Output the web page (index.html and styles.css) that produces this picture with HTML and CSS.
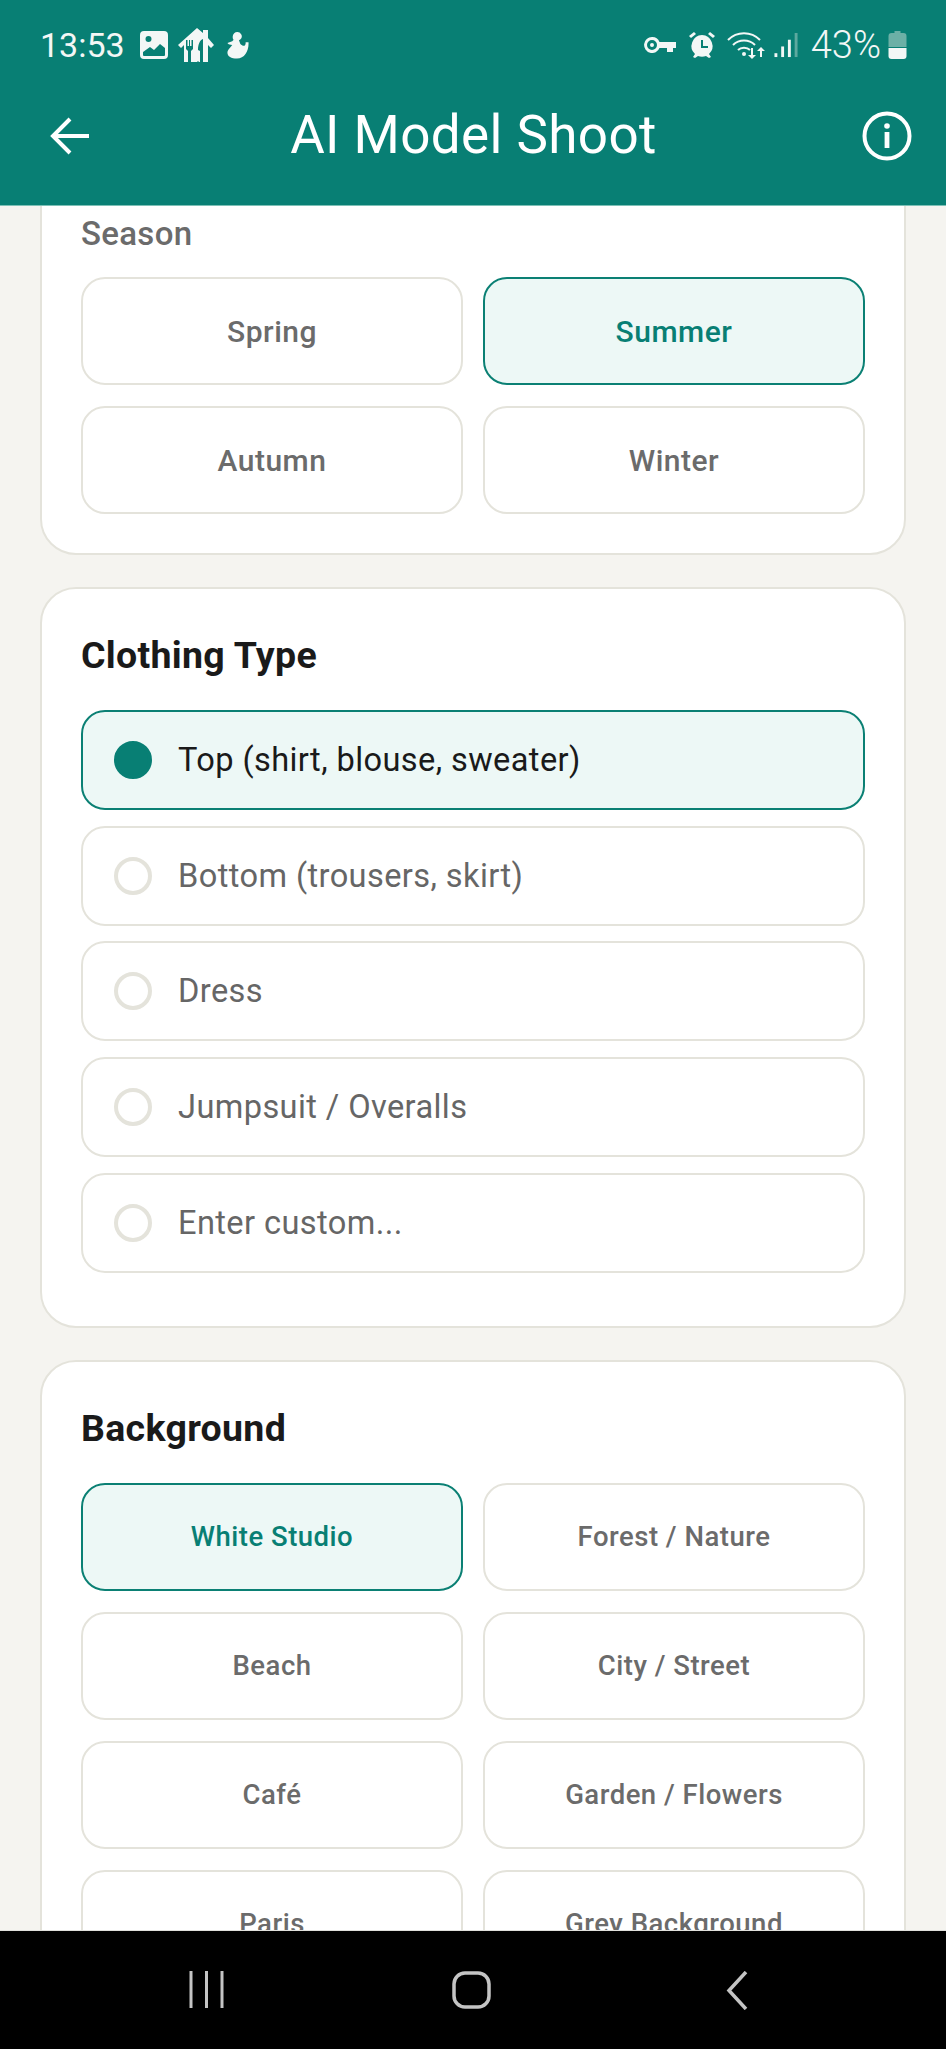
FILE: index.html
```html
<!DOCTYPE html>
<html lang="en">
<head>
<meta charset="utf-8">
<title>AI Model Shoot</title>
<link rel="stylesheet" href="styles.css">
</head>
<body>
<div class="screen">
  <header class="appbar">
    <div class="status">
      <div class="status-side">
        <span class="clock">13:53</span>
        <svg class="ic-photo" viewBox="0 0 28 28"><path fill-rule="evenodd" d="M4 0h20a4 4 0 0 1 4 4v20a4 4 0 0 1-4 4H4a4 4 0 0 1-4-4V4a4 4 0 0 1 4-4zM3 21v3a1 1 0 0 0 1 1h20a1 1 0 0 0 1-1v-7l-5-4-6 6-4-3z M8.500 5a3 3 0 1 0 0 6 3 3 0 0 0 0-6z"/></svg>
        <svg class="ic-food" viewBox="0 0 36 34"><path fill-rule="evenodd" d="M19 0l6 5V2h5v8l6 7-3 3-3-3v17h-9l-1-1-1 1H6V17l-3 3-3-3zM8 12v9l2 2v11h3V23l2-2v-9h-1.500v6H12v-6h-1v6H9.500v-6zM25 11c-3 1-5 5-5 11l2 1v11h3z"/></svg>
        <svg class="ic-duck" viewBox="0 0 24 28"><path d="M12 0a4.500 4.500 0 0 1 4 6.500c-.7 1-1.500 1.500-2.500 2l1.500 4c2 2 4 2.500 5 1 .5-1 .5-2 .5-3h3c.5 9-4 17-12 17-6 0-10-2-10-6 0-3 3-5 5-8-2 0-4-.5-5-2l5-2 1.500-1.500C7 7 7 6 7 4.500A4.700 4.700 0 0 1 12 0z"/></svg>
      </div>
      <div class="status-side">
        <svg class="ic-key" viewBox="0 0 32 16"><path fill-rule="evenodd" d="M8 0a8 8 0 0 1 7.500 5H32v6h-3v4h-6v-4h-7.500A8 8 0 1 1 8 0zm0 3a5 5 0 1 0 0 10 5 5 0 0 0 0-10zm0 3a2 2 0 1 1 0 4 2 2 0 0 1 0-4z"/></svg>
        <svg class="ic-alarm" viewBox="0 0 26 26"><path d="M5 0l2 2-5 4-2-2zM21 0l5 4-2 2-5-4zM13 3a11 11 0 0 1 7 19l2 3-2 1-3-2a11 11 0 0 1-8 0l-3 2-2-1 2-3A11 11 0 0 1 13 3z"/><path class="alarm-hand" d="M12 8h2v6h5v2h-7z"/></svg>
        <svg class="ic-wifi" viewBox="0 0 40 28"><g fill="none" stroke="#f3f7f6" stroke-width="2"><path d="M1 9c9-9 23-9 32 0"/><path d="M6 14c6-6 16-6 22 0"/><path d="M11 19c3-3 9-3 12 0"/></g><circle cx="17" cy="23" r="2" fill="#f3f7f6"/><path fill="#f3f7f6" d="M24 17h2v7h3l-4 4-4-4h3zM34 16l4 4h-3v6h-2v-6h-3z"/></svg>
        <svg class="ic-signal" viewBox="0 0 24 26"><rect x="0" y="21" width="3" height="4" fill="#f3f7f6"/><rect x="7" y="14" width="3" height="11" fill="#f3f7f6"/><rect x="14" y="7" width="3" height="18" fill="#f3f7f6"/><rect x="21" y="0" width="3" height="25" fill="#5da99f"/></svg>
        <span class="clock pct">43%</span>
        <svg class="ic-batt" viewBox="0 0 18 28"><path fill="#6cb0a6" d="M6 0h6v2h3a3 3 0 0 1 3 3v11H0V5a3 3 0 0 1 3-3h3z"/><path fill="#f3f7f6" d="M0 17h18v8a3 3 0 0 1-3 3H3a3 3 0 0 1-3-3z"/></svg>
      </div>
    </div>
    <div class="toolbar">
      <svg class="ic-back" viewBox="0 0 40 40"><path d="M39 20H3M20 3L3 20l17 17" fill="none" stroke="#fff" stroke-width="4"/></svg>
      <h1 class="title">AI Model Shoot</h1>
      <svg class="ic-info" viewBox="0 0 50 50"><circle cx="25" cy="25" r="22.500" fill="none" stroke="#fff" stroke-width="4"/><circle cx="25" cy="15" r="2.800" fill="#fff"/><rect x="22.600" y="21" width="4.800" height="16" fill="#fff"/></svg>
    </div>
  </header>

  <main class="content">
    <section class="card card-first">
      <h3 class="sub">Season</h3>
      <div class="grid">
        <div class="chip">Spring</div>
        <div class="chip on">Summer</div>
        <div class="chip">Autumn</div>
        <div class="chip">Winter</div>
      </div>
    </section>

    <section class="card card-list">
      <h2 class="head">Clothing Type</h2>
      <div class="list">
        <div class="opt on"><span class="radio"></span>Top (shirt, blouse, sweater)</div>
        <div class="opt"><span class="radio"></span>Bottom (trousers, skirt)</div>
        <div class="opt"><span class="radio"></span>Dress</div>
        <div class="opt"><span class="radio"></span>Jumpsuit / Overalls</div>
        <div class="opt"><span class="radio"></span>Enter custom...</div>
      </div>
    </section>

    <section class="card">
      <h2 class="head">Background</h2>
      <div class="grid small">
        <div class="chip on">White Studio</div>
        <div class="chip">Forest / Nature</div>
        <div class="chip">Beach</div>
        <div class="chip">City / Street</div>
        <div class="chip">Café</div>
        <div class="chip">Garden / Flowers</div>
        <div class="chip">Paris</div>
        <div class="chip">Grey Background</div>
      </div>
    </section>
  </main>

  <footer class="navbar">
    <svg class="nav-ic nav-recent" viewBox="0 0 35 37"><path d="M2 0v37M17.500 0v37M33 0v37" fill="none" stroke="#c4c4c4" stroke-width="3"/></svg>
    <svg class="nav-ic nav-home" viewBox="0 0 39 38"><rect x="2" y="2" width="35" height="34" rx="11" fill="none" stroke="#c4c4c4" stroke-width="3.500"/></svg>
    <svg class="nav-ic nav-back" viewBox="0 0 22 39"><path d="M20 1L3 19.500 20 38" fill="none" stroke="#c4c4c4" stroke-width="3.500"/></svg>
  </footer>
</div>
</body>
</html>
```
FILE: styles.css
```css
* { box-sizing: border-box; }
html, body { margin: 0; padding: 0; }
body { font-family: Roboto, "Liberation Sans", sans-serif; background: #f5f4f0; }
.screen { width: 946px; height: 2049px; display: flex; flex-direction: column; overflow: hidden; }

.appbar { height: 206px; flex: none; background: #087f74; color: #fff; border-bottom: 1px solid #7cc0b6; position: relative; z-index: 2; }
.status { height: 88px; display: flex; justify-content: space-between; align-items: center; padding: 2px 39px 0 40px; color: #f3f7f6; }
.status-side { display: flex; align-items: center; }
.clock { font-size: 34px; font-weight: 400; line-height: 1; }
.pct { font-size: 38px; font-weight: 300; }
.status svg { fill: #f3f7f6; display: block; }
.ic-photo { width: 28px; height: 28px; margin-left: 15px; }
.ic-food { width: 36px; height: 34px; margin-left: 10px; }
.ic-duck { width: 23px; height: 27px; margin-left: 12px; }
.ic-key { width: 32px; height: 16px; }
.ic-alarm { width: 26px; height: 26px; margin-left: 13px; }
.alarm-hand { fill: #087f74; }
.ic-wifi { width: 40px; height: 28px; margin-left: 12px; }
.ic-signal { width: 24px; height: 25px; margin-left: 7px; }
.pct { margin-left: 13px; }
.ic-batt { width: 19px; height: 28px; margin-left: 7px; }

.toolbar { height: 117px; display: grid; grid-template-columns: 1fr auto 1fr; align-items: center; padding: 0 34px 21px 35px; }
.ic-back { width: 40px; height: 40px; margin-left: 15px; }
.title { margin: 0; font-size: 53px; font-weight: 400; line-height: 1.2; letter-spacing: 0.4px; }
.ic-info { width: 50px; height: 50px; justify-self: end; }

.content { flex: 1; min-height: 0; overflow: hidden; padding: 0 40px; display: flex; flex-direction: column; gap: 32px; }
.card { flex: none; background: #fff; border: 2px solid #e4e3db; border-radius: 36px; padding: 39px; }
.card-first { margin-top: -60px; padding-top: 66px; }
.card-list { padding-bottom: 53px; }
.sub { margin: 0 0 23px; font-size: 33px; line-height: 40px; font-weight: 500; color: #6b6b6b; letter-spacing: .3px; }
.head { margin: 0 0 28px; font-size: 37.500px; line-height: 54px; font-weight: 700; color: #1a1a1a; letter-spacing: .3px; }

.grid { display: grid; grid-template-columns: 1fr 1fr; gap: 21px 20px; }
.chip { height: 108px; display: flex; align-items: center; justify-content: center; background: #fff; border: 2px solid #e4e3db; border-radius: 24px; font-size: 30px; font-weight: 500; color: #6b6b6b; letter-spacing: .5px; }
.small .chip { font-size: 27.500px; }
.chip.on { background: #edf8f6; border-color: #0b8074; color: #087f74; }

.list { display: flex; flex-direction: column; gap: 15.700px; }
.opt { height: 100px; display: flex; align-items: center; gap: 26px; padding-left: 31px; background: #fff; border: 2px solid #e4e3db; border-radius: 24px; font-size: 32.600px; font-weight: 450; color: #666; letter-spacing: .4px; }
.opt.on { background: #edf8f6; border-color: #0b8074; color: #1a1a1a; }
.radio { width: 38px; height: 38px; flex: none; border-radius: 50%; border: 4px solid #e4e3db; }
.opt.on .radio { background: #087f74; border-color: #087f74; }

.navbar { height: 119px; flex: none; background: #000; display: flex; align-items: flex-start; padding: 40px 0 0 189px; position: relative; z-index: 2; border-top: 1px solid #e0e0dc; }
.nav-ic { display: block; }
.nav-recent { width: 35px; height: 37px; }
.nav-home { width: 39px; height: 38px; margin-left: 228px; }
.nav-back { width: 22px; height: 39px; margin-left: 235px; }
```
